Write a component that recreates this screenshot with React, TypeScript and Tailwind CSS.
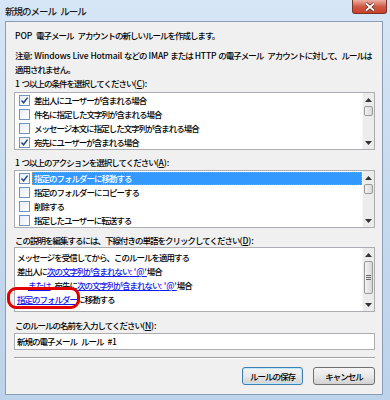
import React from 'react';

// latin runs keep (almost) normal spacing; the CJK text is tightened
function L({ children }: { children: React.ReactNode }) {
  return <span className="tracking-[-0.1px]">{children}</span>;
}

// word gap between CJK runs
function Sp() {
  return <span className="tracking-[2px]"> </span>;
}

function Mn({ children }: { children: React.ReactNode }) {
  return <span className="underline underline-offset-1">{children}</span>;
}

function Check({ on }: { on: boolean }) {
  return (
    <span className="flex h-[11px] w-[11px] shrink-0 items-center justify-center border border-[#7193c2] bg-gradient-to-br from-[#e6edf6] to-white">
      {on && (
        <svg width="9" height="9" viewBox="0 0 9 9">
          <path d="M1.5 4.5 L3.6 6.8 L7.6 1.6" fill="none" stroke="#23457e" strokeWidth="1.5" />
        </svg>
      )}
    </span>
  );
}

function Arrow({ up }: { up: boolean }) {
  return (
    <div className="flex h-[13px] items-center justify-center">
      <svg width="7" height="4" viewBox="0 0 7 4">
        <path d={up ? 'M0 4 L3.5 0 L7 4 Z' : 'M0 0 L3.5 4 L7 0 Z'} fill="#333" />
      </svg>
    </div>
  );
}

function Scrollbar({ thumb, grip }: { thumb: number; grip?: boolean }) {
  return (
    <div className="flex w-[12px] flex-col border-l border-[#f8f8f8] bg-[#ececec]">
      <Arrow up />
      <div
        className="mx-[1px] flex flex-col items-center justify-center gap-[1px] rounded-[2px] border border-[#9a9a9a] bg-gradient-to-r from-[#f3f3f3] to-[#d8d8d8]"
        style={{ height: thumb }}
      >
        {grip && (
          <>
            <span className="h-px w-[5px] bg-[#666]" />
            <span className="h-px w-[5px] bg-[#666]" />
            <span className="h-px w-[5px] bg-[#666]" />
          </>
        )}
      </div>
      <div className="flex-1" />
      <Arrow up={false} />
    </div>
  );
}

function CheckList({ items, selected }: { items: { text: string; on: boolean }[]; selected?: number }) {
  return (
    <div className="flex h-[58px] border border-[#abadb3] bg-white">
      <div className="flex flex-1 flex-col">
        {items.map((it, i) => (
          <div key={i} className="flex h-[14px] items-center pl-[4px]">
            <Check on={it.on} />
            <span
              className={
                i === selected
                  ? 'ml-[2px] flex h-[13px] flex-1 items-center border border-dotted border-[#c99a4a] bg-[#3399ff] pl-[1px] text-white'
                  : 'ml-[2px] flex h-[13px] flex-1 items-center border border-transparent pl-[1px]'
              }
            >
              {it.text}
            </span>
          </div>
        ))}
      </div>
      <Scrollbar thumb={10} />
    </div>
  );
}

function Link({ children }: { children: React.ReactNode }) {
  return <span className="text-[#1515ee] underline underline-offset-1">{children}</span>;
}

function Button({ children, primary }: { children: React.ReactNode; primary?: boolean }) {
  return (
    <div
      className={
        'flex h-[18px] items-center justify-center rounded-[3px] border bg-gradient-to-b from-[#f4f4f4] via-[#e8e8e8] to-[#d2d2d2] ' +
        (primary ? 'w-[61px] border-[#3c7fb1] shadow-[inset_0_0_0_1px_#bfe6fb]' : 'w-[62px] border-[#707070]')
      }
    >
      {children}
    </div>
  );
}

export default function App() {
  return (
    <div className="relative h-[400px] w-[390px] overflow-hidden bg-gradient-to-b from-[#d6e6f6] via-[#c6daef] to-[#bcd3eb] font-['Noto_Sans_CJK_JP',sans-serif] text-[8.5px] font-medium leading-[14px] tracking-[-1px] text-black">
      <div className="flex h-[21px] items-start">
        <span className="mt-[4px] pl-[5px] text-[9.5px] text-[#1a1a1a]">
          新規のメール<Sp />ルール
        </span>
        <div className="ml-auto mr-[3px] flex h-[14px] w-[35px] items-center justify-center rounded-b-[3px] border border-t-0 border-[#7a3328] bg-gradient-to-b from-[#eab0a6] via-[#cf5a45] to-[#c9402a]">
          <svg width="12" height="10" viewBox="0 0 12 10">
            <path d="M2 1.5 L10 8.5 M10 1.5 L2 8.5" stroke="#5a2018" strokeWidth="3.2" />
            <path d="M2 1.5 L10 8.5 M10 1.5 L2 8.5" stroke="#ffffff" strokeWidth="1.8" />
          </svg>
        </div>
      </div>

      <div className="mx-[5px] flex h-[374px] w-[378px] flex-col border border-[#8b9db2] bg-[#f0f0f0] pl-[8px] pr-[7px] pt-[6px]">
        <p className="pl-[1px]">
          <L>POP</L>
          <Sp />
          電子メール<Sp />アカウントの新しいルールを作成します。
        </p>
        <p className="mt-[6px] pl-[1px]">
          注意<L>: Windows Live Hotmail </L>などの<L> IMAP </L>または<L> HTTP </L>の電子メール<Sp />アカウントに対して、ルールは
          <br />
          適用されません。
        </p>
        <p className="pl-[1px]">
          <L>1 </L>つ以上の条件を選択してください<L>(<Mn>C</Mn>):</L>
        </p>
        <div className="mt-[2px]">
          <CheckList
            items={[
              { text: '差出人にユーザーが含まれる場合', on: true },
              { text: '件名に指定した文字列が含まれる場合', on: false },
              { text: 'メッセージ本文に指定した文字列が含まれる場合', on: false },
              { text: '宛先にユーザーが含まれる場合', on: true },
            ]}
          />
        </div>
        <p className="mt-[5px] pl-[1px]">
          <L>1 </L>つ以上のアクションを選択してください<L>(<Mn>A</Mn>):</L>
        </p>
        <div className="mt-[1px]">
          <CheckList
            selected={0}
            items={[
              { text: '指定のフォルダーに移動する', on: true },
              { text: '指定のフォルダーにコピーする', on: false },
              { text: '削除する', on: false },
              { text: '指定したユーザーに転送する', on: false },
            ]}
          />
        </div>
        <p className="mt-[5px] pl-[1px]">
          この説明を編集するには、下線付きの単語をクリックしてください<L>(<Mn>D</Mn>):</L>
        </p>
        <div className="flex h-[65px] border border-[#abadb3] bg-white">
          <div className="flex flex-1 flex-col pl-[2px] pt-[2px]">
            <div className="h-[14px]">メッセージを受信してから、このルールを適用する</div>
            <div className="h-[14px]">
              差出人に
              <Link>
                次の文字列が含まれない<L>: '@'</L>
              </Link>
              場合
            </div>
            <div className="h-[14px] pl-[11px]">
              <Link>または</Link>
              <Sp />
              宛先に
              <Link>
                次の文字列が含まれない<L>: '@'</L>
              </Link>
              場合
            </div>
            <div className="h-[14px]">
              <Link>指定のフォルダー</Link>に移動する
            </div>
          </div>
          <Scrollbar thumb={33} grip />
        </div>
        <p className="mt-[6px] pl-[1px]">
          このルールの名前を入力してください<L>(<Mn>N</Mn>):</L>
        </p>
        <div className="mt-[1px] h-[17px] border border-[#abadb3] bg-white pl-[2px] leading-[15px]">
          新規の電子メール<Sp />ルール<Sp />
          <L>#1</L>
        </div>
        <div className="mt-[7px] h-px bg-[#a0a0a0]" />
        <div className="h-px bg-white" />
        <div className="mt-[8px] flex justify-end gap-[10px]">
          <Button primary>ルールの保存</Button>
          <Button>キャンセル</Button>
        </div>
      </div>

      <div className="absolute left-[7px] top-[287px] h-[22px] w-[73px] rounded-[9px] border-[3px] border-[#e30000]" />
    </div>
  );
}
